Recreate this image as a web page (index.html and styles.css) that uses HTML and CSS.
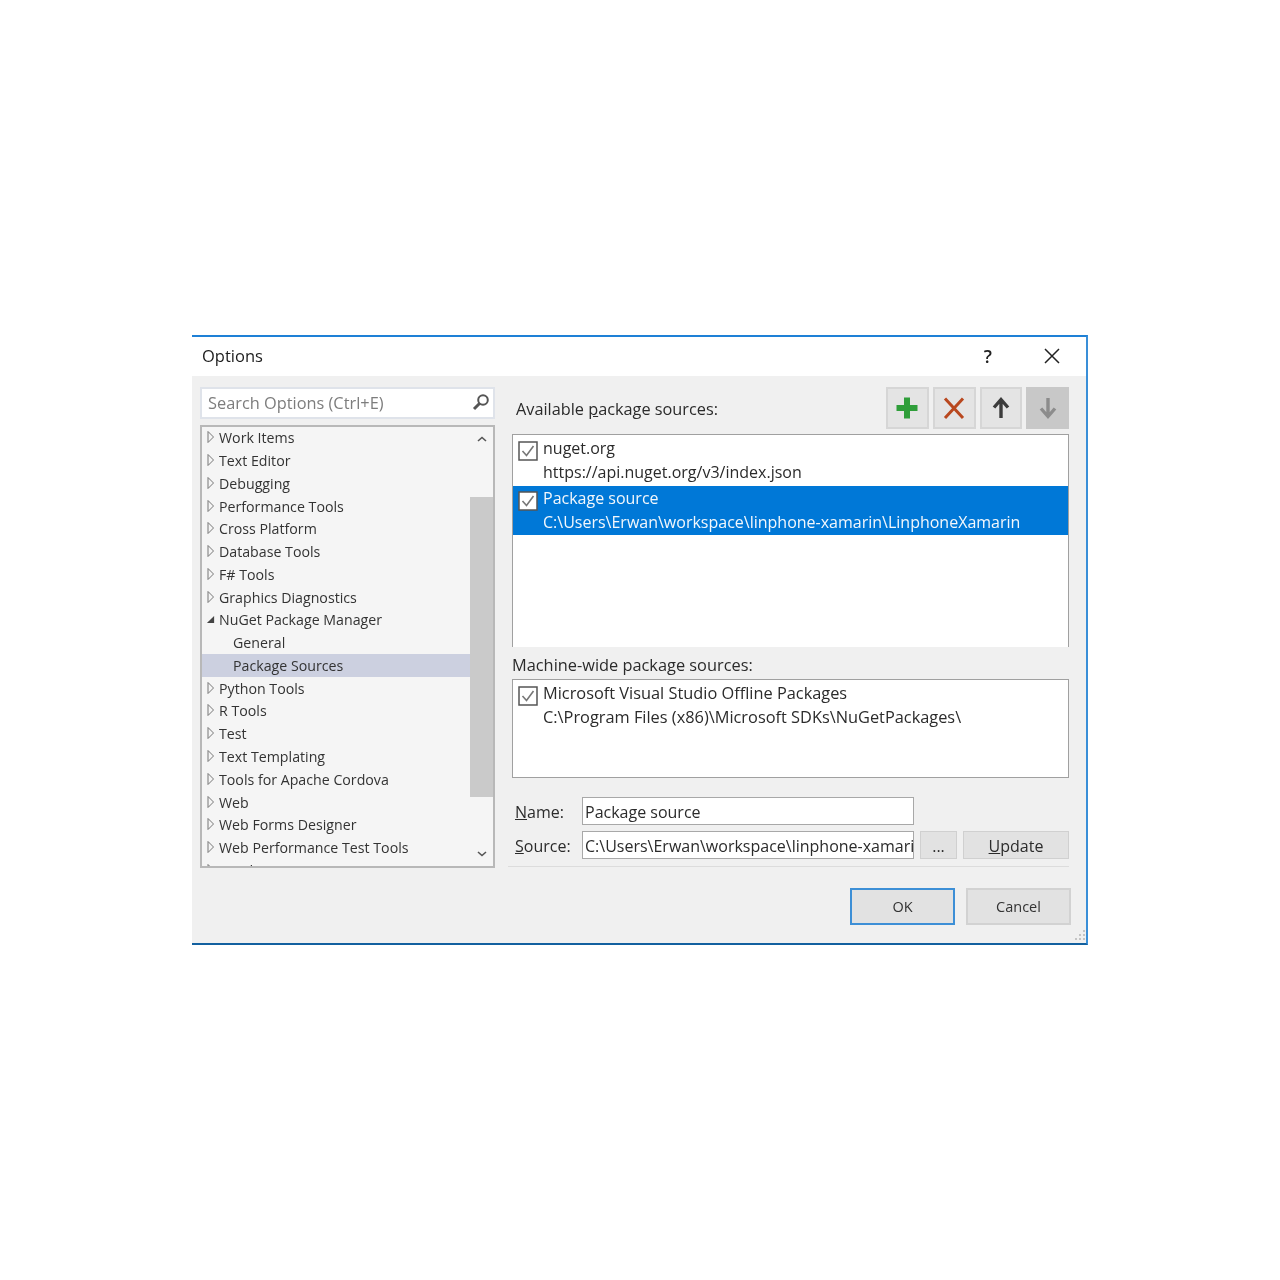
FILE: index.html
```html
<!DOCTYPE html>
<html lang="en">
<head>
<meta charset="utf-8">
<title>Options</title>
<link rel="stylesheet" href="styles.css">
</head>
<body>
<svg class="defs" width="0" height="0" aria-hidden="true">
  <symbol id="closed" viewBox="0 0 8 14"><path d="M1 1.5 L6.5 7 L1 12.5 Z" fill="none" stroke="#777" stroke-width="1"/></symbol>
  <symbol id="open" viewBox="0 0 10 10"><path d="M9 1 V9 H1 Z" fill="#444"/></symbol>
  <symbol id="check" viewBox="0 0 20 20"><rect x="1" y="1" width="18" height="18" fill="#fff" stroke="#555" stroke-width="1.5"/><path d="M4.5 10 L8.5 14.5 L15.5 5" fill="none" stroke="#777" stroke-width="1.6"/></symbol>
</svg>
<main class="dialog">
  <header class="titlebar">
    <span class="title">Options</span>
    <span class="help">?</span>
    <svg class="close" viewBox="0 0 16 16"><path d="M1 1 L15 15 M15 1 L1 15" stroke="#222" stroke-width="1.5" fill="none"/></svg>
  </header>
  <div class="content">
    <div class="left">
      <div class="search">
        <span class="search-text">Search Options (Ctrl+E)</span>
        <svg class="search-icon" viewBox="0 0 18 18"><circle cx="11" cy="7" r="4.8" fill="none" stroke="#555" stroke-width="2"/><path d="M7.5 10.5 L2 16" stroke="#555" stroke-width="3" fill="none"/></svg>
      </div>
      <div class="tree">
        <ul class="rows">
          <li class="row"><svg class="arrow"><use href="#closed"/></svg>Work Items</li>
          <li class="row"><svg class="arrow"><use href="#closed"/></svg>Text Editor</li>
          <li class="row"><svg class="arrow"><use href="#closed"/></svg>Debugging</li>
          <li class="row"><svg class="arrow"><use href="#closed"/></svg>Performance Tools</li>
          <li class="row"><svg class="arrow"><use href="#closed"/></svg>Cross Platform</li>
          <li class="row"><svg class="arrow"><use href="#closed"/></svg>Database Tools</li>
          <li class="row"><svg class="arrow"><use href="#closed"/></svg>F# Tools</li>
          <li class="row"><svg class="arrow"><use href="#closed"/></svg>Graphics Diagnostics</li>
          <li class="row"><svg class="arrow arrow-open"><use href="#open"/></svg>NuGet Package Manager</li>
          <li class="row child">General</li>
          <li class="row child selected">Package Sources</li>
          <li class="row"><svg class="arrow"><use href="#closed"/></svg>Python Tools</li>
          <li class="row"><svg class="arrow"><use href="#closed"/></svg>R Tools</li>
          <li class="row"><svg class="arrow"><use href="#closed"/></svg>Test</li>
          <li class="row"><svg class="arrow"><use href="#closed"/></svg>Text Templating</li>
          <li class="row"><svg class="arrow"><use href="#closed"/></svg>Tools for Apache Cordova</li>
          <li class="row"><svg class="arrow"><use href="#closed"/></svg>Web</li>
          <li class="row"><svg class="arrow"><use href="#closed"/></svg>Web Forms Designer</li>
          <li class="row"><svg class="arrow"><use href="#closed"/></svg>Web Performance Test Tools</li>
          <li class="row"><svg class="arrow"><use href="#closed"/></svg>Windows Forms Designer</li>
        </ul>
        <div class="scrollbar">
          <svg class="sb-btn" viewBox="0 0 10 6"><path d="M1 5 L5 1.5 L9 5" fill="none" stroke="#555" stroke-width="1.6"/></svg>
          <div class="sb-track"><div class="sb-thumb"></div></div>
          <svg class="sb-btn" viewBox="0 0 10 6"><path d="M1 1 L5 4.5 L9 1" fill="none" stroke="#555" stroke-width="1.6"/></svg>
        </div>
      </div>
    </div>
    <div class="right">
      <div class="top-row">
        <span class="avail">Available <u>p</u>ackage sources:</span>
        <div class="tools">
          <button class="tool"><svg viewBox="0 0 24 24"><path d="M12 1.5 V22.5 M1.5 12 H22.5" stroke="#2f9e3a" stroke-width="6" fill="none"/></svg></button>
          <button class="tool"><svg viewBox="0 0 24 24"><path d="M3 2.5 L21 22 M21 2.5 L3 22" stroke="#b9481f" stroke-width="3" fill="none"/></svg></button>
          <button class="tool"><svg viewBox="0 0 24 24"><path d="M12 22 V4 M5 11.5 L12 3.5 L19 11.5" stroke="#3c3c3c" stroke-width="3.4" fill="none"/></svg></button>
          <button class="tool tool-off"><svg viewBox="0 0 24 24"><path d="M12 2 V20 M5 12.5 L12 20.5 L19 12.5" stroke="#8c8c8c" stroke-width="3.4" fill="none"/></svg></button>
        </div>
      </div>
      <div class="list list-main">
        <div class="source">
          <svg class="check"><use href="#check"/></svg>
          <div class="source-text"><div>nuget.org</div><div>https://api.nuget.org/v3/index.json</div></div>
        </div>
        <div class="source source-selected">
          <svg class="check"><use href="#check"/></svg>
          <div class="source-text"><div>Package source</div><div>C:\Users\Erwan\workspace\linphone-xamarin\LinphoneXamarin</div></div>
        </div>
      </div>
      <div class="machine">Machine-wide package sources:</div>
      <div class="list list-machine">
        <div class="source">
          <svg class="check"><use href="#check"/></svg>
          <div class="source-text"><div>Microsoft Visual Studio Offline Packages</div><div>C:\Program Files (x86)\Microsoft SDKs\NuGetPackages\</div></div>
        </div>
      </div>
      <div class="form-row form-name">
        <label class="label"><u>N</u>ame:</label>
        <div class="input">Package source</div>
      </div>
      <div class="form-row">
        <label class="label"><u>S</u>ource:</label>
        <div class="input">C:\Users\Erwan\workspace\linphone-xamarin\LinphoneXamarin</div>
        <button class="btn btn-dots">...</button>
        <button class="btn btn-update"><u>U</u>pdate</button>
      </div>
      <div class="separator"></div>
    </div>
  </div>
  <footer class="footer">
    <button class="dlg ok">OK</button>
    <button class="dlg">Cancel</button>
    <svg class="grip" viewBox="0 0 12 12"><path d="M9 1h2v2H9zM5 5h2v2H5zM9 5h2v2H9zM1 9h2v2H1zM5 9h2v2H5zM9 9h2v2H9z" fill="#c4c4c4"/></svg>
  </footer>
</main>
</body>
</html>
```
FILE: styles.css
```css
* { box-sizing: border-box; }
html, body { margin: 0; padding: 0; background: #fff; }
body {
  width: 1280px;
  height: 1280px;
  padding-top: 335px;
  padding-left: 192px;
  font-family: "Open Sans", "Noto Sans", sans-serif;
  font-size: 15px;
  color: #2b2b2b;
}
.defs { display: block; height: 0; }
.dialog {
  position: relative;
  width: 896px;
  height: 610px;
  background: #f0f0f0;
  border-top: 2px solid #1e80d6;
  border-right: 2px solid #3a8fd8;
  border-bottom: 2px solid #12609f;
  display: flex;
  flex-direction: column;
  filter: blur(0.35px);
}
.titlebar {
  height: 39px;
  background: #fff;
  display: flex;
  align-items: center;
  padding: 0 0 2px 10px;
  flex: none;
}
.title { font-size: 16.5px; color: #1c1c1c; flex: 1; }
.help { font-size: 18px; font-weight: 600; color: #222; margin-right: 52px; }
.close { width: 16px; height: 16px; margin-right: 26px; }
.content {
  display: flex;
  flex: none;
  height: 492px;
  padding: 11px 0 0 8px;
}
.left { width: 295px; flex: none; display: flex; flex-direction: column; }
.search {
  height: 32px;
  background: #fff;
  border: 2px solid #dfe3ea;
  display: flex;
  align-items: center;
  padding: 0 3px 0 6px;
  flex: none;
}
.search-text { flex: 1; color: #7d7d7d; font-size: 16.35px; }
.search-icon { width: 18px; height: 18px; margin-top: -3px; }
.tree {
  margin-top: 6px;
  height: 443px;
  flex: none;
  display: flex;
  background: #f5f5f5;
  border: 2px solid #b8b8b8;
  overflow: hidden;
}
.rows { list-style: none; margin: -0.6px 0 0; padding: 0; flex: 1; }
.row {
  height: 22.78px;
  line-height: 22px;
  display: flex;
  align-items: center;
  padding: 1px 0 0 5px;
  font-size: 14.2px;
  white-space: nowrap;
  color: #333;
}
.arrow { width: 8px; height: 14px; margin: -2px 4px 0 0; flex: none; }
.arrow-open { width: 9px; height: 9px; margin: -2px 4px 0 -1px; }
.child { padding-left: 31px; }
.selected { background: #ccd0e0; }
.scrollbar {
  width: 23px;
  flex: none;
  display: flex;
  flex-direction: column;
  align-items: center;
}
.sb-btn { width: 10px; height: 6px; margin: 9px 0; flex: none; }
.sb-track { flex: 1; width: 100%; padding-top: 46px; padding-bottom: 45px; display: flex; }
.sb-thumb { flex: 1; background: #cacaca; }
.right { width: 557px; margin-left: 17px; flex: none; display: flex; flex-direction: column; }
.top-row { display: flex; align-items: center; justify-content: space-between; height: 42px; padding-left: 4px; flex: none; }
.avail { font-size: 16.3px; padding-top: 2px; }
.tools { display: flex; gap: 4px; }
.tool {
  width: 42.75px;
  height: 42px;
  padding: 0;
  background: #e4e4e4;
  border: 2px solid #d6d6d6;
  display: flex;
  align-items: center;
  justify-content: center;
}
.tool svg { width: 24px; height: 24px; }
.tool-off { background: #c8c8c8; border-color: #c8c8c8; }
.list {
  background: #fff;
  border: 1px solid #a0a0a0;
  margin-top: 5px;
  flex: none;
}
.list-main { height: 213px; border-bottom: 0; }
.source { display: flex; height: 51px; font-size: 16px; padding: 1px 0 0 5px; }
.source-text { line-height: 24px; white-space: nowrap; }
.check { width: 20px; height: 20px; margin: 5px 5px 0 0; flex: none; }
.source-selected { background: #0078d7; color: #f2f7fc; height: 49px; padding-top: 0; }
.machine { font-size: 16.35px; height: 26px; line-height: 36px; flex: none; }
.list-machine { height: 99px; margin-top: 6px; }
.list-machine .source { font-size: 16.35px; }
.form-row { display: flex; align-items: center; margin-top: 6px; height: 28px; padding-left: 3px; flex: none; }
.form-name { margin-top: 19px; }
.label { width: 67px; flex: none; font-size: 16px; padding-top: 2px; }
.input {
  width: 332px;
  height: 28px;
  background: #fff;
  border: 1px solid #a8a8a8;
  padding-left: 2px;
  font-size: 16px;
  line-height: 28px;
  white-space: nowrap;
  overflow: hidden;
  flex: none;
}
.btn {
  height: 28px;
  background: #e2e2e2;
  border: 1px solid #d0d0d0;
  font: inherit;
  font-size: 16px;
  color: #2b2b2b;
  padding: 1px 0 0;
}
.btn-dots { width: 37px; margin-left: 6px; }
.btn-update { width: 106px; margin-left: 6px; }
.separator { height: 1px; background: #dcdcdc; margin: 7px 0 0 -4px; flex: none; }
.footer { flex: 1; display: flex; justify-content: flex-end; gap: 11px; padding: 20px 15px 0 0; position: relative; }
.dlg {
  width: 105px;
  height: 37px;
  background: #e2e2e2;
  border: 2px solid #d2d2d2;
  font: inherit;
  font-size: 14.5px;
  color: #333;
  padding: 0;
}
.ok { border-color: #3d8fd6; }
.grip { position: absolute; right: 0; bottom: 2px; width: 12px; height: 12px; }
```
